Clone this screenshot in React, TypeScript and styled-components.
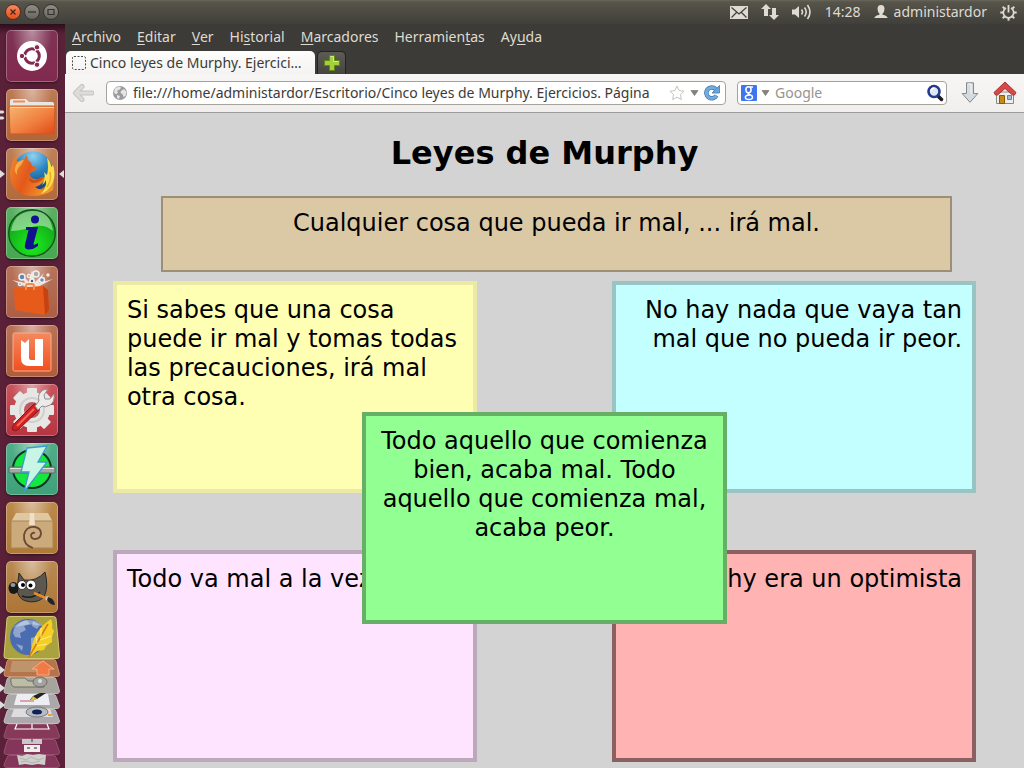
import React from "react";
import styled, { createGlobalStyle, css } from "styled-components";

const UI_FONT = '"Noto Sans", "Open Sans", sans-serif';
const PAGE_FONT = '"DejaVu Sans", Verdana, sans-serif';

const GlobalStyle = createGlobalStyle`
  *, *::before, *::after { box-sizing: border-box; }
  body { margin: 0; background: #3c3b37; }
  button { font: inherit; color: inherit; background: none; border: 0; padding: 0; cursor: default; }
  svg { display: block; flex: none; }
`;

const Desktop = styled.div`
  display: flex;
  flex-direction: column;
  min-height: 100vh;
  font-family: ${UI_FONT};
  font-size: 14px;
`;

/* Top panel */

const Panel = styled.header`
  display: flex;
  align-items: center;
  justify-content: space-between;
  height: 24px;
  padding: 0 7px 0 5px;
  color: #dfdbd2;
  background: linear-gradient(#69665a, #57544a 2px, #403f3a);
`;

const WindowButtons = styled.div`
  display: flex;
  gap: 3px;
`;

const WindowButton = styled.button<{ $close?: boolean }>`
  display: flex;
  align-items: center;
  justify-content: center;
  width: 16px;
  height: 16px;
  border-radius: 50%;
  border: 1px solid ${(p) => (p.$close ? "#5e2b17" : "#34332f")};
  background: ${(p) => (p.$close ? "linear-gradient(#f58a63, #e4501c)" : "linear-gradient(#8f8d85, #66655e)")};
`;

const Indicators = styled.div`
  display: flex;
  align-items: center;
  gap: 13px;
`;

const Indicator = styled.button`
  display: flex;
  align-items: center;
  gap: 6px;
  line-height: 20px;
`;

/* Launcher */

const Shell = styled.div`
  display: flex;
  flex: 1;
`;

const Launcher = styled.nav`
  display: flex;
  flex-direction: column;
  flex: none;
  width: 65px;
  padding-top: 6px;
  background: linear-gradient(#2b0d1a, rgba(43, 13, 26, 0) 10px),
    linear-gradient(90deg, #5a2138, #531d33 50%, #5a2138);
`;

const Apps = styled.div`
  display: flex;
  flex-direction: column;
  gap: 7px;
`;

const AppSlot = styled.div`
  display: grid;
  grid-template-columns: 6px 52px 7px;
  align-items: center;
`;

const Tile = styled.button<{ $from: string; $to: string }>`
  width: 52px;
  height: 52px;
  border-radius: 5px;
  background: radial-gradient(ellipse at 50% 0, rgba(255, 255, 255, 0.45), rgba(255, 255, 255, 0) 55%),
    linear-gradient(${(p) => p.$from}, ${(p) => p.$to});
  box-shadow: inset 0 0 0 1px rgba(255, 255, 255, 0.28), 0 1px 2px rgba(0, 0, 0, 0.4);
`;

const Stack = styled.div`
  display: flex;
  flex-direction: column;
  margin-top: 3px;
`;

const StackItem = styled.button`
  display: block;
  width: 65px;
`;

/* Browser */

const Browser = styled.main`
  display: flex;
  flex-direction: column;
  flex: 1;
  min-width: 0;
`;

const MenuBar = styled.nav`
  display: flex;
  gap: 16px;
  height: 26px;
  padding: 0 7px;
  align-items: center;
  color: #dfdbd2;
  background: #3c3b37;
  line-height: 20px;
  u { text-underline-offset: 2px; }
`;

const TabStrip = styled.div`
  display: flex;
  gap: 2px;
  height: 24px;
  padding: 1px 1px 0;
  background: #3c3b37;
`;

const Tab = styled.button`
  display: flex;
  align-items: center;
  gap: 4px;
  width: 249px;
  padding: 0 7px 0 6px;
  border-radius: 5px 5px 0 0;
  color: #3c3b37;
  background: linear-gradient(#fdfdfc, #f4f3f1);
  white-space: nowrap;
  line-height: 22px;
`;

const NewTab = styled.button`
  display: flex;
  align-items: center;
  justify-content: center;
  width: 29px;
  border: 1px solid #24231f;
  border-bottom: 0;
  border-radius: 5px 5px 0 0;
  background: linear-gradient(#5c5b56, #45443f);
`;

const Toolbar = styled.div`
  display: flex;
  align-items: center;
  gap: 11px;
  height: 39px;
  padding: 0 7px 0 6px;
  border-bottom: 1px solid #9c9b98;
  background: linear-gradient(#f7f6f5, #f0efed);
`;

const ToolButton = styled.button`
  display: flex;
  justify-content: center;
  width: 24px;
`;

const field = css`
  display: flex;
  align-items: center;
  height: 24px;
  border: 1px solid #a5a39a;
  border-radius: 4px;
  background: #fff;
`;

const AddressBar = styled.form`
  ${field}
  flex: 1;
  min-width: 0;
  gap: 5px;
  padding: 0 5px;
`;

const SearchBar = styled.form`
  ${field}
  width: 210px;
  gap: 4px;
  padding: 0 2px 0 3px;
`;

const FieldInput = styled.input`
  flex: 1;
  min-width: 0;
  height: 20px;
  padding: 0;
  border: 0;
  outline: 0;
  background: none;
  color: #3c3b37;
  font: 14px/20px ${UI_FONT};
  &::placeholder { color: #96948f; opacity: 1; }
`;

const SearchInput = styled(FieldInput)`
  padding-left: 1px;
`;

/* Page */

const Page = styled.article`
  flex: 1;
  padding: 22px 0 7px;
  background: #d3d3d3;
  color: #000;
  font-family: ${PAGE_FONT};
`;

const Title = styled.h1`
  margin: 0 0 24px;
  font-size: 32px;
  line-height: 37px;
  text-align: center;
`;

const Law = styled.p<{ $bg: string; $edge: string; $align?: string }>`
  min-height: 212px;
  margin: 0;
  padding: 11px 10px 10px;
  border: 4px solid ${(p) => p.$edge};
  background: ${(p) => p.$bg};
  text-align: ${(p) => p.$align || "left"};
  font-size: 24px;
  line-height: 29px;
`;

const FirstLaw = styled(Law)`
  min-height: 76px;
  margin: 0 7.5% 9px 10%;
  border-width: 2px;
`;

const Board = styled.div`
  position: relative;
  display: grid;
  grid-template-columns: 38fr 14fr 38fr;
  row-gap: 57px;
  padding: 0 5%;
`;

const LeftLaw = styled(Law)`
  grid-column: 1;
`;

const RightLaw = styled(Law)`
  grid-column: 3;
`;

const CenterLaw = styled(Law)`
  position: absolute;
  top: 131px;
  left: 31%;
  width: 38%;
`;

/* Launcher drawings, each on a 52 x 52 tile */

const Dash = () => (
  <svg width="52" height="52" viewBox="0 0 52 52">
    <circle cx="26" cy="26" r="15" fill="#fff" />
    <circle cx="26" cy="26" r="7.3" fill="none" stroke="#84294f" strokeWidth="3" />
    <g stroke="#fff" strokeWidth="1.3">
      <path d="M26 26H15M26 26l6-10M26 26l6 10" />
    </g>
    <circle cx="26" cy="26" r="5.2" fill="#fff" />
    <g fill="#84294f" stroke="#fff" strokeWidth="1">
      <circle cx="16" cy="26" r="2.7" />
      <circle cx="31" cy="17.3" r="2.7" />
      <circle cx="31" cy="34.7" r="2.7" />
    </g>
  </svg>
);

const Folder = () => (
  <svg width="52" height="52" viewBox="0 0 52 52">
    <defs>
      <linearGradient id="folder" x1="0" y1="0" x2="1" y2="1">
        <stop offset="0" stopColor="#f7b46f" />
        <stop offset=".55" stopColor="#f08040" />
        <stop offset="1" stopColor="#e04816" />
      </linearGradient>
    </defs>
    <path d="M4 45V12q0-2 2-2h14l3 3h23q2 0 2 2v30z" fill="#e9e7e4" />
    <path d="M7 12.5h12" stroke="#f28b50" strokeWidth="2" />
    <path d="M3 19q0-2 2-2h42q2 0 2 2l-1 26H4z" fill="url(#folder)" stroke="#d0571f" strokeWidth="1" />
    <path d="M4 18.5h44" stroke="#fbd3aa" strokeWidth="1" />
  </svg>
);

const Firefox = () => (
  <svg width="52" height="52" viewBox="0 0 52 52">
    <defs>
      <radialGradient id="ffGlobe" cx=".5" cy=".12" r=".9">
        <stop offset="0" stopColor="#8fd2f2" />
        <stop offset=".45" stopColor="#2b86c4" />
        <stop offset="1" stopColor="#123a78" />
      </radialGradient>
      <linearGradient id="ffBody" x1="0" y1="0" x2="1" y2=".4">
        <stop offset="0" stopColor="#f08a2c" />
        <stop offset=".5" stopColor="#e4581c" />
        <stop offset="1" stopColor="#f2962a" />
      </linearGradient>
    </defs>
    <circle cx="27" cy="23" r="19.5" fill="url(#ffGlobe)" />
    <path
      d="M8 9l4 5q3-2 6-2l2-5q2 3 2 5 4 3 4 6l5 1q-1 4-7 6-1 3 2 5 3 2 6 1 4-3 7-1 1 2-1 3-4 5-9 6 5 4 11 2 6-3 8-10l-1 11C41 46 34 48 26 48 12 48 4 38 4 27 4 20 6 16 8 9z"
      fill="url(#ffBody)"
    />
    <path d="M12 14q3-2 6-2l-3 5q-5 4-4 10-5-6 1-13z" fill="#f7ab45" />
    <path d="M23 30q5 4 10 0 3-1 5 0-4 5-11 5-4-1-4-5z" fill="#b83a10" opacity=".6" />
    <path d="M41 10q4 4 4 9l2-2q3 9 0 17-4 9-12 12 6-7 5-14-1 3-4 5 4-7 2-13l3 3q2-8 0-17z" fill="#f9e04a" />
    <path d="M44 24q2 8-3 15" fill="none" stroke="#f3a72c" strokeWidth="1.5" />
  </svg>
);

const Info = () => (
  <svg width="52" height="52" viewBox="0 0 52 52">
    <defs>
      <radialGradient id="info" cx=".5" cy=".75" r=".7">
        <stop offset="0" stopColor="#1bf01b" />
        <stop offset="1" stopColor="#129a1b" />
      </radialGradient>
    </defs>
    <circle cx="26" cy="26" r="23.3" fill="url(#info)" stroke="#12551a" strokeWidth="1.4" />
    <path d="M5 24Q8 5 26 4t21 20Q38 16 26 20T5 24z" fill="#fff" opacity=".45" />
    <circle cx="29" cy="12.5" r="4" fill="#12128f" />
    <path d="M20 20h12l-4.500 17q0 2 4.500-1v3q-5 4-10 3.500-4-.5-3-5L22.500 23H20z" fill="#12128f" />
  </svg>
);

const Software = () => (
  <svg width="52" height="52" viewBox="0 0 52 52">
    <path d="M26 24L6 14l13 3-4-9 8 8 3-12 3 12 9-9-5 10 14-4z" fill="#fff" opacity=".75" />
    <g stroke="#f2efec" strokeWidth="1.500">
      <circle cx="16" cy="11" r="3" fill="#5e86b5" />
      <circle cx="30" cy="8" r="3" fill="#aaa" />
      <circle cx="36" cy="14" r="2.500" fill="#6f8fb0" />
      <circle cx="23" cy="10" r="1.500" fill="#d65a35" />
      <circle cx="14" cy="18" r="1.500" fill="#777" />
      <circle cx="26" cy="15" r="2" fill="#47617d" />
      <circle cx="42" cy="9" r="1" fill="#c55" />
    </g>
    <path d="M8 22l29-2 5 4 1 20-4 5-30-5z" fill="#e65a1a" />
    <path d="M37 20l5 4 1 20-4 5z" fill="#c64211" />
    <path d="M20 24v-4q0-2 2-2h4q2 0 2 2v4" fill="none" stroke="#f58a4d" strokeWidth="2" />
  </svg>
);

const UbuntuOne = () => (
  <svg width="52" height="52" viewBox="0 0 52 52">
    <defs>
      <linearGradient id="one" x1="0" y1="0" x2="0" y2="1">
        <stop offset="0" stopColor="#f4885f" />
        <stop offset="1" stopColor="#f2501f" />
      </linearGradient>
    </defs>
    <rect x="7" y="8" width="38" height="38" rx="1.500" fill="url(#one)" stroke="#f9b08f" />
    <path d="M15 15l4 3 4-4v19q0 2 2 2h4V14h8v27H23q-8 0-8-8z" fill="#fff" />
  </svg>
);

const Settings = () => (
  <svg width="52" height="52" viewBox="0 0 52 52">
    <g transform="translate(26 26)">
      <g fill="#e6e6e4">
        {[0, 45, 90, 135].map((a) => (
          <rect key={a} x="-5" y="-22" width="10" height="44" rx="1" transform={`rotate(${a})`} />
        ))}
        <circle r="18" />
      </g>
      <circle r="8" fill="#bd5a60" />
      <circle r="12" fill="none" stroke="#cfcfcd" strokeWidth="2" />
    </g>
    <path d="M33 21l-5-1-19 19q-4 5-2 7t6-1l20-19z" fill="#cf2020" stroke="#8d1414" />
    <path d="M11 42l17-17" stroke="#ee6a60" strokeWidth="2" />
    <path
      d="M29 22l4-5q-2-7 4-11l5-1-4 6 1 4 5 0 4-5q1 8-4 11t-8 1l-4 4z"
      fill="#ecebe9"
      stroke="#8f8f8d"
    />
  </svg>
);

const Power = () => (
  <svg width="52" height="52" viewBox="0 0 52 52">
    <circle cx="26" cy="26" r="19" fill="#14e83f" stroke="#0c3424" strokeWidth="2" />
    <rect x="3" y="24" width="46" height="6" rx="1" fill="#a2a8a5" stroke="#5e6b66" />
    <path d="M4 25.500h44" stroke="#dfe3e1" />
    <path d="M21 5l20-2-9 16h9L18 49l5-20h-8z" fill="#c9f5e4" stroke="#3f9ad0" strokeWidth="1.3" />
  </svg>
);

const Package = () => (
  <svg width="52" height="52" viewBox="0 0 52 52">
    <path d="M10 11h32l5 9H5z" fill="#dfc7a2" />
    <path d="M5 19h42v27H5z" fill="#cbab7b" stroke="#a98553" />
    <path d="M24 11h4l1 12h-6z" fill="#efe0c6" />
    <path
      d="M27 46q-10-3-9-13 2-9 11-8 6 1 6 7-1 5-6 5-4 0-4-4 1-3 4-2"
      fill="none"
      stroke="#6e4836"
      strokeWidth="1.800"
    />
  </svg>
);

const Gimp = () => (
  <svg width="52" height="52" viewBox="0 0 52 52">
    <path d="M13 12l5 7q12 2 21-8 4 15-1 25-7 7-18 4-8-2-9-12z" fill="#5c5850" stroke="#2b2926" />
    <circle cx="16" cy="24" r="4.500" fill="#fff" stroke="#333" />
    <circle cx="25" cy="24" r="5" fill="#fff" stroke="#333" />
    <circle cx="17" cy="24" r="2" />
    <circle cx="24.500" cy="24.500" r="2" />
    <ellipse cx="7.500" cy="27" rx="5" ry="6" fill="#16181a" />
    <ellipse cx="7" cy="24" rx="2.500" ry="2" fill="#8f999f" />
    <path d="M16 35q10 4 18-4" fill="none" stroke="#1f1d1a" strokeWidth="1.500" />
    <path d="M28 32l14 6" stroke="#e88a2b" strokeWidth="2.500" />
    <path d="M40 37l3 1" stroke="#ccc" strokeWidth="4" />
    <path d="M42 36q6 1 7 8-5 0-8-5z" fill="#20242c" />
  </svg>
);

const Pips = () => (
  <svg width="6" height="16" viewBox="0 0 6 16" fill="#dedede">
    <path d="M0 3.500h3l1.500 1.500L3 6.500H0zM0 9.500h3l1.500 1.500L3 12.500H0z" />
  </svg>
);

const ArrowRight = () => (
  <svg width="6" height="10" viewBox="0 0 6 10">
    <path d="M0 1l5 4-5 4z" fill="#dedede" />
  </svg>
);

const ArrowLeft = () => (
  <svg width="7" height="10" viewBox="0 0 7 10">
    <path d="M6 1L1 5l5 4z" fill="#dedede" />
  </svg>
);

type App = {
  name: string;
  from: string;
  to: string;
  icon: React.ReactNode;
  left?: React.ReactNode;
  right?: React.ReactNode;
};

const apps: App[] = [
  { name: "Inicio", from: "#7f3355", to: "#81294e", icon: <Dash /> },
  { name: "Archivos", from: "#bd7a54", to: "#b0653a", icon: <Folder />, left: <Pips /> },
  { name: "Firefox", from: "#bf8058", to: "#b26a3c", icon: <Firefox />, left: <ArrowRight />, right: <ArrowLeft /> },
  { name: "Información", from: "#5cae62", to: "#45a850", icon: <Info /> },
  { name: "Software", from: "#b7735a", to: "#ab5f45", icon: <Software /> },
  { name: "Ubuntu One", from: "#b97256", to: "#b05c3a", icon: <UbuntuOne /> },
  { name: "Configuración", from: "#c9545c", to: "#b73440", icon: <Settings /> },
  { name: "Energía", from: "#4fae88", to: "#3fa179", icon: <Power /> },
  { name: "Paquetes", from: "#bd8a4c", to: "#af7936", icon: <Package /> },
  { name: "GIMP", from: "#b98a52", to: "#ad7535", icon: <Gimp /> },
];

type Folded = { name: string; height: number; fill: string; edge: string; running?: boolean; art: React.ReactNode };

const folded: Folded[] = [
  {
    name: "Navegador",
    height: 43,
    fill: "#aaa23f",
    edge: "#d3cb77",
    art: (
      <g>
        <circle cx="28" cy="21" r="18" fill="#4a6cb0" />
        <path d="M14 13q6-8 13-9l3 4-6 2 2 4-6 3 1 5-6-1-2-4zM31 22l8-2 3 9-6 7-5-6zM33 5l7 4-3 4-5-3zM16 28l7 2-1 5z" fill="#8fa5cd" />
        <path d="M13 12Q19 4 29 4q9 0 14 6-14-4-30 2z" fill="#fff" opacity=".35" />
        <path d="M30 39q2-14 7-22T51 3q2 6 1 9l2 3-2 6 0 5-6 4-2 4-7 1-6 5z" fill="#f6cf24" />
        <path d="M29 41Q38 25 48 8" fill="none" stroke="#d9791c" strokeWidth="1.500" />
        <path d="M37 28l-1-8M41 22V12M40 24l11-4M37 30l10-2" stroke="#fdf08c" strokeWidth="1" />
      </g>
    ),
  },
  {
    name: "Actualizaciones",
    height: 18,
    fill: "#b5754c",
    edge: "#cc9470",
    running: true,
    art: (
      <g>
        <path d="M12 2h33v11H10z" fill="#bd946b" />
        <path d="M43 2l11 8h-5v6H37v-6h-5z" fill="#f17a45" stroke="#f9ab84" />
      </g>
    ),
  },
  {
    name: "Discos",
    height: 17,
    fill: "#a6a49c",
    edge: "#bcbab4",
    running: true,
    art: (
      <g>
        <path d="M11 1h14l3 3h16v6H14q-4-2-3-9z" fill="#bcbca7" stroke="#6f6f62" />
        <ellipse cx="40" cy="5" rx="7" ry="5" fill="#a3a39e" stroke="#6b6b68" />
        <circle cx="40" cy="4" r="2" fill="#ddd" />
      </g>
    ),
  },
  {
    name: "Editor",
    height: 15,
    fill: "#aaa8a8",
    edge: "#bfbdbd",
    running: true,
    art: (
      <g>
        <path d="M17 0h31l2 11H14z" fill="#eceef2" />
        <path d="M20 7h14" stroke="#c7596a" />
        <path d="M30 6l3-4 7-3 6 0-9 6z" fill="#22221f" />
        <path d="M30 7l3-5 4 3z" fill="#d8c343" />
      </g>
    ),
  },
  {
    name: "Capturas",
    height: 15,
    fill: "#aca9ac",
    edge: "#c2bfc2",
    art: (
      <g>
        <path d="M14 0h36l3 8H11z" fill="#dddde0" />
        <ellipse cx="37" cy="3" rx="11" ry="5" fill="#b7bcc4" stroke="#777" />
        <ellipse cx="37" cy="3" rx="5" ry="2.500" fill="#0c2358" />
        <path d="M48 6h4" stroke="#f0a030" strokeWidth="2" />
      </g>
    ),
  },
  {
    name: "Escritorios",
    height: 15,
    fill: "#87395a",
    edge: "#985070",
    art: <path d="M17 0l-2 5h34l-2-5M32 0v5" fill="none" stroke="#fff" strokeWidth="1.200" />,
  },
  {
    name: "USB",
    height: 16,
    fill: "#83355a",
    edge: "#985070",
    art: (
      <g>
        <path d="M22 0h20v5H22z" fill="#c9c7c9" />
        <path d="M24 6h16v7H24z" fill="#efeded" />
        <path d="M27 9h3M34 9h3M32 0v3" stroke="#76606c" strokeWidth="1.500" />
      </g>
    ),
  },
  {
    name: "Papelera",
    height: 13,
    fill: "#83355a",
    edge: "#985070",
    art: (
      <g>
        <path d="M17 0l5 1 5-2 6 1 6-1 7 1-1 10-7-1-6 1-7-1-6 1z" fill="#cfcfcb" />
        <path d="M20 3l6 2 5-3 7 3 6-2M21 7l6-1 5 2 8-2" fill="none" stroke="#b3b3b0" />
      </g>
    ),
  },
];

const FoldedIcon = ({ item }: { item: Folded }) => (
  <svg width="65" height={item.height} viewBox={`0 0 65 ${item.height}`} overflow="visible">
    <path
      d={`M9.500.5H53.500Q55.500.5 56 2.500L59.500 ${item.height - 3}q0 2.500-2.500 2.500H6.500q-2.500 0-2.500-2.500L7 2.500Q7.500.5 9.500.5z`}
      fill={item.fill}
      stroke={item.edge}
    />
    {item.art}
    {item.running && <path d="M0 7l5 4-5 4z" fill="#dedede" />}
  </svg>
);

/* Small interface drawings */

const Mail = () => (
  <svg width="18" height="13" viewBox="0 0 18 13">
    <path d="M0 0h18v13H0z" fill="#dfdbd2" />
    <path d="M1.500 1.500L9 8l7.500-6.500M1.500 11.500l5-5M16.500 11.500l-5-5" fill="none" stroke="#45433d" strokeWidth="1.300" />
  </svg>
);

const Network = () => (
  <svg width="18" height="16" viewBox="0 0 18 16" fill="#dfdbd2">
    <path d="M5 0l5 5H7v7H3V5H0zM13 16l-5-5h3V4h4v7h3z" />
  </svg>
);

const Volume = () => (
  <svg width="20" height="16" viewBox="0 0 20 16">
    <path d="M0 5.500h3L7 2v12l-4-3.500H0z" fill="#dfdbd2" />
    <path d="M9.500 5.500q2 2.500 0 5M12.500 3.500q3.500 4.500 0 9M15.500 1q5 7 0 14" fill="none" stroke="#dfdbd2" strokeWidth="1.600" />
  </svg>
);

const Person = () => (
  <svg width="14" height="14" viewBox="0 0 14 14">
    <path d="M7 0q3.500 0 3.500 3.800Q10.500 7 8.600 8.500v1.200q4.400.8 5.100 3.300H.3q.7-2.500 5.100-3.300V8.500Q3.500 7 3.500 3.800 3.500 0 7 0z" fill="#dfdbd2" />
  </svg>
);

const Gear = () => (
  <svg width="17" height="17" viewBox="-8.500 -8.500 17 17">
    <g stroke="#dfdbd2" strokeWidth="2">
      {[45, 90, 135, 180, 225, 270, 315].map((a) => (
        <path key={a} d="M0-5.500v-2.700" transform={`rotate(${a})`} />
      ))}
      <path d="M-2.500-4.500A5.200 5.200 0 1 0 2.500-4.500" fill="none" strokeWidth="1.700" />
      <path d="M0-7.500V0" strokeWidth="1.800" />
    </g>
  </svg>
);

const BlankPage = () => (
  <svg width="14" height="14" viewBox="0 0 14 14">
    <rect x=".5" y=".5" width="13" height="13" rx="1.500" fill="none" stroke="#4c4b48" strokeDasharray="2 1.500" />
  </svg>
);

const Plus = () => (
  <svg width="16" height="16" viewBox="0 0 16 16">
    <path d="M5.500.5h5v5h5v5h-5v5h-5v-5h-5v-5h5z" fill="#a4cf3a" stroke="#5e8a12" />
    <path d="M6.500 1.500h3v5h5" fill="none" stroke="#d2ec86" />
  </svg>
);

const Back = () => (
  <svg width="22" height="18" viewBox="0 0 22 18">
    <path d="M10 2.500L3.500 9l6.500 6.500M4 9h16" fill="none" stroke="#c6c4c0" strokeWidth="5" strokeLinecap="round" strokeLinejoin="round" />
    <path d="M10 2.500L3.500 9l6.500 6.500M4 9h16" fill="none" stroke="#dedcd9" strokeWidth="3" strokeLinecap="round" strokeLinejoin="round" />
  </svg>
);

const Globe = () => (
  <svg width="16" height="16" viewBox="0 0 16 16">
    <circle cx="8" cy="8" r="7" fill="#9b9b9b" />
    <path d="M3 3.500l4-2 2 1-1 2-3 1 1 2-2 2-2-2zM9 6l3-2 2.500 3-1 4-2 1-1-3-2-1zM5 10l3 1-1 3-2-1z" fill="#e6e6e6" />
  </svg>
);

const Star = () => (
  <svg width="16" height="16" viewBox="0 0 16 16">
    <path d="M8 1l2.100 4.600 5 .6-3.700 3.400 1 5L8 12.100l-4.400 2.500 1-5L.9 6.200l5-.6z" fill="#fff" stroke="#c6c4c0" />
  </svg>
);

const Caret = () => (
  <svg width="9" height="6" viewBox="0 0 9 6">
    <path d="M1 .5h7L4.500 5.500z" fill="#84827d" stroke="#6b6964" strokeWidth=".6" />
  </svg>
);

const Reload = () => (
  <svg width="16" height="16" viewBox="0 0 16 16">
    <path d="M12.500 10.500A5.400 5.400 0 1 1 11.500 4" fill="none" stroke="#3f79b5" strokeWidth="4.500" />
    <path d="M15.500.5v7.500H8z" fill="#6aa5d9" stroke="#3f79b5" strokeWidth=".8" />
    <path d="M12.500 10.500A5.400 5.400 0 1 1 11.500 4" fill="none" stroke="#73abdd" strokeWidth="3" />
  </svg>
);

const Google = () => (
  <svg width="16" height="16" viewBox="0 0 16 16">
    <rect width="16" height="16" rx="1" fill="#3f76f0" />
    <g fill="none" stroke="#fff">
      <ellipse cx="7.500" cy="4.800" rx="2.600" ry="3" strokeWidth="1.500" />
      <path d="M9 2h3M8.500 7.500q-2 .8-1 1.800 4 1 4 2.700 0 2.500-3.700 2.500-3.500 0-3.500-2.200 0-2 4-2.300" strokeWidth="1.400" />
    </g>
  </svg>
);

const Magnifier = () => (
  <svg width="18" height="18" viewBox="0 0 18 18">
    <path d="M11.500 11.500l4 4" stroke="#1b1b22" strokeWidth="3.500" strokeLinecap="round" />
    <circle cx="8" cy="7.500" r="5.500" fill="#dbe9f7" stroke="#253a8a" strokeWidth="2.600" />
    <path d="M5 7q.5-3 3.500-3" fill="none" stroke="#fff" strokeWidth="1.300" />
  </svg>
);

const Download = () => (
  <svg width="18" height="22" viewBox="0 0 18 22">
    <path d="M5.500.8h7v10.700h4.300L9 20.300 1.200 11.500h4.300z" fill="#d5dbde" stroke="#83898c" strokeLinejoin="round" />
    <path d="M7 2h3v10" fill="none" stroke="#f4f6f7" />
  </svg>
);

const Home = () => (
  <svg width="24" height="24" viewBox="0 0 24 24">
    <path d="M3.500 11h17v11.500h-17z" fill="#eeeeec" stroke="#888a85" />
    <path d="M12 1L1 11.500l1.500 2.500 2 0L12 7.500l7.500 6.500 2 0 1.500-2.500z" fill="#d84848" stroke="#a83030" strokeLinejoin="round" />
    <path d="M6.500 14.500h5v8h-5z" fill="#c98a1b" stroke="#8f5902" />
    <path d="M14.500 14.500h4v4h-4z" fill="#9dbbd8" stroke="#7d7f7a" />
  </svg>
);

const menus: [string, string, string][] = [
  ["", "A", "rchivo"],
  ["", "E", "ditar"],
  ["", "V", "er"],
  ["Hi", "s", "torial"],
  ["", "M", "arcadores"],
  ["Herramien", "t", "as"],
  ["Ay", "u", "da"],
];

export default function App() {
  return (
    <Desktop>
      <GlobalStyle />
      <Panel>
        <WindowButtons>
          <WindowButton $close aria-label="Cerrar">
            <svg width="8" height="8" viewBox="0 0 8 8">
              <path d="M1.500 1.500l5 5M6.500 1.500l-5 5" stroke="#4a2315" strokeWidth="1.300" />
            </svg>
          </WindowButton>
          <WindowButton aria-label="Minimizar">
            <svg width="8" height="8" viewBox="0 0 8 8">
              <path d="M0 4h8" stroke="#33322e" strokeWidth="1.300" />
            </svg>
          </WindowButton>
          <WindowButton aria-label="Maximizar">
            <svg width="8" height="8" viewBox="0 0 8 8">
              <path d="M1 1.500h6v5h-6z" fill="none" stroke="#33322e" strokeWidth="1.200" />
            </svg>
          </WindowButton>
        </WindowButtons>
        <Indicators>
          <Indicator aria-label="Mensajes"><Mail /></Indicator>
          <Indicator aria-label="Red"><Network /></Indicator>
          <Indicator aria-label="Sonido"><Volume /></Indicator>
          <Indicator>14:28</Indicator>
          <Indicator><Person />administardor</Indicator>
          <Indicator aria-label="Sistema"><Gear /></Indicator>
        </Indicators>
      </Panel>
      <Shell>
        <Launcher aria-label="Lanzador">
          <Apps>
            {apps.map((app) => (
              <AppSlot key={app.name}>
                <span>{app.left}</span>
                <Tile $from={app.from} $to={app.to} aria-label={app.name}>{app.icon}</Tile>
                <span>{app.right}</span>
              </AppSlot>
            ))}
          </Apps>
          <Stack>
            {folded.map((item) => (
              <StackItem key={item.name} aria-label={item.name}>
                <FoldedIcon item={item} />
              </StackItem>
            ))}
          </Stack>
        </Launcher>
        <Browser>
          <MenuBar>
            {menus.map(([before, key, after]) => (
              <button key={before + key + after}>
                {before}
                <u>{key}</u>
                {after}
              </button>
            ))}
          </MenuBar>
          <TabStrip>
            <Tab>
              <BlankPage />
              Cinco leyes de Murphy. Ejercici…
            </Tab>
            <NewTab aria-label="Pestaña nueva"><Plus /></NewTab>
          </TabStrip>
          <Toolbar>
            <ToolButton aria-label="Atrás"><Back /></ToolButton>
            <AddressBar>
              <Globe />
              <FieldInput
                type="text"
                aria-label="Dirección"
                defaultValue="file:///home/administardor/Escritorio/Cinco leyes de Murphy. Ejercicios. Página"
              />
              <button type="button" aria-label="Añadir a marcadores"><Star /></button>
              <button type="button" aria-label="Historial"><Caret /></button>
              <button type="button" aria-label="Recargar"><Reload /></button>
            </AddressBar>
            <SearchBar>
              <Google />
              <button type="button" aria-label="Elegir buscador"><Caret /></button>
              <SearchInput type="text" aria-label="Buscar" placeholder="Google" />
              <button type="button" aria-label="Buscar"><Magnifier /></button>
            </SearchBar>
            <ToolButton aria-label="Descargas"><Download /></ToolButton>
            <ToolButton aria-label="Inicio"><Home /></ToolButton>
          </Toolbar>
          <Page>
            <Title>Leyes de Murphy</Title>
            <FirstLaw $bg="#dbc9a6" $edge="#9c8f75" $align="center">
              Cualquier cosa que pueda ir mal, ... irá mal.
            </FirstLaw>
            <Board>
              <LeftLaw $bg="#ffffb3" $edge="#ebe9a4">
                Si sabes que una cosa puede ir mal y tomas todas las precauciones, irá mal otra cosa.
              </LeftLaw>
              <RightLaw $bg="#c4ffff" $edge="#99c4c4" $align="right">
                No hay nada que vaya tan mal que no pueda ir peor.
              </RightLaw>
              <LeftLaw $bg="#ffe4ff" $edge="#bba8bb">Todo va mal a la vez.</LeftLaw>
              <RightLaw $bg="#ffb3b3" $edge="#8a6060" $align="right">Murphy era un optimista</RightLaw>
              <CenterLaw $bg="#92ff92" $edge="#66b066" $align="center">
                Todo aquello que comienza bien, acaba mal. Todo aquello que comienza mal, acaba peor.
              </CenterLaw>
            </Board>
          </Page>
        </Browser>
      </Shell>
    </Desktop>
  );
}
